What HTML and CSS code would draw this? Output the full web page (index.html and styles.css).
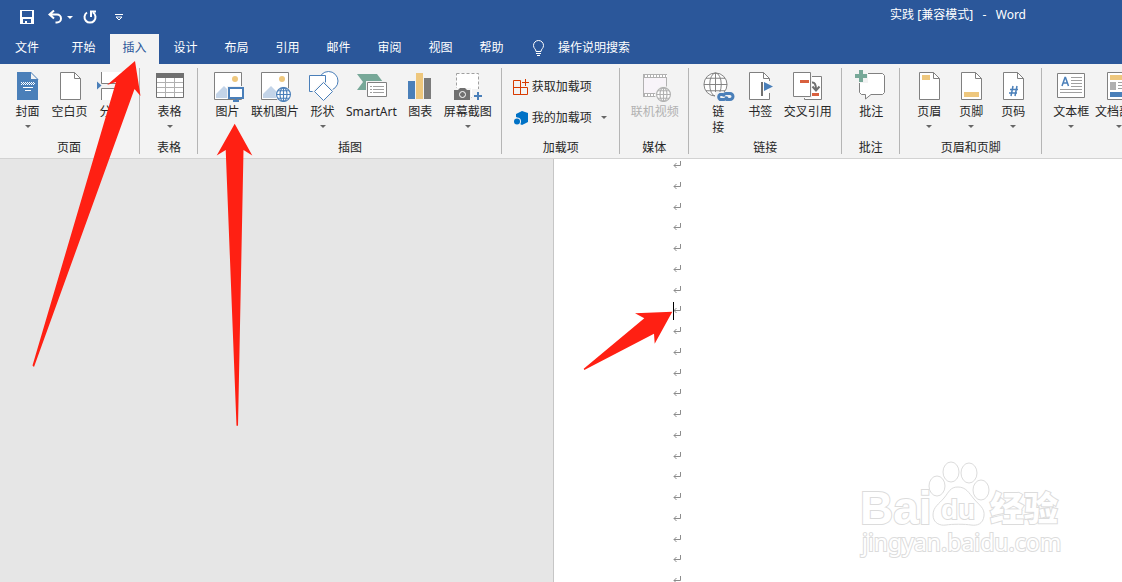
FILE: index.html
```
<!DOCTYPE html>
<html lang="zh-CN">

<head>
  <meta charset="UTF-8">
  <meta name="viewport" content="width=device-width, initial-scale=1.0">
  <title>实践 [兼容模式] - Word</title>
  <link rel="stylesheet" href="styles.css">
</head>

<body>
  <svg class="sprite" aria-hidden="true">
    <symbol id="page" viewBox="0 0 32 32">
      <path d="M6.5 2.5h14l6 6v21h-20z" fill="#fff" stroke="#808080"/>
      <path d="M20.500 2.500v6h6" fill="none" stroke="#808080"/>
    </symbol>
    <symbol id="picture" viewBox="0 0 32 32">
      <path d="M2.500 2.500h27v27h-27z" fill="#fff" stroke="#808080"/>
      <circle cx="23" cy="9" r="3" fill="#eec77d"/>
      <path d="M4 28v-4l8-8 8 8v4z" fill="#c3d4e8"/>
    </symbol>
    <symbol id="globe" viewBox="0 0 26 26">
      <circle cx="13" cy="13" r="12" fill="#fff"/>
      <path d="M13 1v24M1 13h24M3 6.500h20M3 19.500h20"/>
      <ellipse cx="13" cy="13" rx="6" ry="12"/>
    </symbol>
    <symbol id="enter" viewBox="0 0 9 8">
      <path d="M7.500 0v4.500H1M3.500 2L1 4.500 3.500 7" fill="none" stroke="#8c8c8c"/>
    </symbol>
  </svg>

  <header class="titlebar">
    <div class="quick">
      <button class="quick-btn save" aria-label="保存">
        <svg width="14" height="14" viewBox="0 0 14 14"><path d="M0 0h14v14H0zM2 1v6h10V1zM3 9v4h8V9z" fill="#fff" fill-rule="evenodd"/><path d="M5 11h2v3H5z" fill="#fff"/></svg>
      </button>
      <button class="quick-btn undo" aria-label="撤消">
        <svg width="15" height="14" viewBox="0 0 15 14"><path d="M1.500 4.500H9a4 4 0 0 1 0 8H7.500M6 .5l-4.500 4L6 8.500" fill="none" stroke="#fff" stroke-width="2"/></svg>
        <i class="caret"></i>
      </button>
      <button class="quick-btn redo" aria-label="重复">
        <svg width="14" height="14" viewBox="0 0 14 14"><path d="M4 2.500a5.500 5.500 0 1 0 6 0M8 7V1.500h5" fill="none" stroke="#fff" stroke-width="2"/></svg>
      </button>
      <button class="quick-btn more" aria-label="自定义快速访问工具栏">
        <svg width="8" height="7" viewBox="0 0 8 7"><path d="M0 .5h8M1 3l3 3 3-3z" fill="none" stroke="#fff"/></svg>
      </button>
    </div>
    <div class="title">实践 [兼容模式]&nbsp;&nbsp; -&nbsp;&nbsp; Word</div>
  </header>

  <nav class="tabs">
    <button class="tab file">文件</button>
    <button class="tab">开始</button>
    <button class="tab active">插入</button>
    <button class="tab">设计</button>
    <button class="tab">布局</button>
    <button class="tab">引用</button>
    <button class="tab">邮件</button>
    <button class="tab">审阅</button>
    <button class="tab">视图</button>
    <button class="tab">帮助</button>
    <label class="tell" for="tell">
      <svg width="13" height="17" viewBox="0 0 13 17"><path d="M4 11.500C4 9 1.500 8.500 1.500 5.500a5 5 0 0 1 10 0C11.500 8.500 9 9 9 11.500zM4 13.500h5M5 15.500h3" fill="none" stroke="#fff"/></svg>
    </label>
    <input id="tell" type="text" placeholder="操作说明搜索" aria-label="操作说明搜索">
  </nav>

  <div class="ribbon">
    <section class="group">
      <div class="tools">
        <button class="tool">
          <svg class="icon" viewBox="0 0 32 32"><path d="M5 2h13l8 8v20H5z" fill="#4a7fb9"/><path d="M18.500 2l7.500 7.500h-7.500z" fill="#f3f3f3" stroke="#4a7fb9"/><path d="M9 12.500h13M10 13.500h13M9 14.500h13" stroke="#fff" stroke-dasharray="1 1"/><path d="M11 17.500h10M13 20.500h6" stroke="#fff"/></svg>
          <span>封面</span><i class="caret"></i>
        </button>
        <button class="tool">
          <svg class="icon"><use href="#page"/></svg>
          <span>空白页</span>
        </button>
        <button class="tool">
          <svg class="icon" viewBox="0 0 32 32"><path d="M6 2h21v11H6zM6 18h21v12H6z" fill="#fff"/><path d="M5.500 2v11.500h21V2M5.500 30V18.500h21V30" fill="none" stroke="#808080"/><path d="M1 11.500v8l4.500-4z" fill="#4a7fb9"/></svg>
          <span>分页</span>
        </button>
      </div>
      <h2>页面</h2>
    </section>

    <section class="group">
      <div class="tools">
        <button class="tool">
          <svg class="icon" viewBox="0 0 32 32"><path d="M2.500 3.500h27v24h-27z" fill="#fff"/><path d="M3 12.500h26M3 17.500h26M3 22.500h26M11.500 8v19M20.500 8v19" stroke="#b0b0b0"/><path d="M2.500 3.500h27v24h-27z" fill="none" stroke="#707070"/><path d="M2 3h28v5H2z" fill="#707070"/></svg>
          <span>表格</span><i class="caret"></i>
        </button>
      </div>
      <h2>表格</h2>
    </section>

    <section class="group">
      <div class="tools">
        <button class="tool">
          <svg class="icon" viewBox="0 0 32 32"><use href="#picture"/><path d="M15 16h17v13H15z" fill="#f3f3f3"/><path d="M17 18h14v10H17z" fill="#fff" stroke="#4a7fb9" stroke-width="2"/><path d="M23 29h2v2h-2zM21 30h6v2h-6z" fill="#4a7fb9"/></svg>
          <span>图片</span>
        </button>
        <button class="tool">
          <svg class="icon" viewBox="0 0 32 32"><use href="#picture"/><circle cx="24.500" cy="24.500" r="8" fill="#f3f3f3"/><use href="#globe" x="17" y="17" width="15" height="15" fill="none" stroke="#4a7fb9" stroke-width="2"/></svg>
          <span>联机图片</span>
        </button>
        <button class="tool">
          <svg class="icon" viewBox="0 0 32 32"><g fill="#fff" stroke="#4a7fb9"><circle cx="21.500" cy="11" r="9.500"/><path d="M2.500 5.500h16v16h-16z"/><path d="M16.500 12.500l9 9-9 9-9-9z" stroke="#f3f3f3" stroke-width="3"/><path d="M16.500 12.500l9 9-9 9-9-9z"/></g></svg>
          <span>形状</span><i class="caret"></i>
        </button>
        <button class="tool">
          <svg class="icon" viewBox="0 0 32 32"><path d="M2 4h20l6 8v8H2l6-8z" fill="#77a898"/><path d="M11 11h21v17H11z" fill="#f3f3f3"/><path d="M12.500 12.500h19v14h-19z" fill="#fff" stroke="#808080"/><path d="M15 16.500h2M15 19.500h2M15 22.500h2M18 16.500h11M18 19.500h11M18 22.500h11" stroke="#a0a0a0"/></svg>
          <span>SmartArt</span>
        </button>
        <button class="tool">
          <svg class="icon" viewBox="0 0 32 32"><path d="M4 11h7v18H4z" fill="#4a7fb9"/><path d="M12 3h7v26h-7z" fill="#eec77d"/><path d="M20 8h7v21h-7z" fill="#7b7b7b"/></svg>
          <span>图表</span>
        </button>
        <button class="tool">
          <svg class="icon" viewBox="0 0 32 32"><path d="M4.500 3.500h22v24h-22z" fill="#fff" stroke="#a0a0a0" stroke-dasharray="3 2"/><path d="M1 18h18v13H1z" fill="#f3f3f3"/><path d="M2 20h4l2-2h5l2 2h3v10H2z" fill="#707070"/><circle cx="10.500" cy="24.500" r="3" fill="#707070" stroke="#fff"/><path d="M20 19h12v12H20z" fill="#f3f3f3"/><path d="M22 26h8M26 22v8" stroke="#4a7fb9" stroke-width="2"/></svg>
          <span>屏幕截图</span><i class="caret"></i>
        </button>
      </div>
      <h2>插图</h2>
    </section>

    <section class="group">
      <div class="rows">
        <button class="row">
          <svg width="16" height="16" viewBox="0 0 16 16"><path d="M.5 1.500h7v14h-7zM.5 8.500h14v7h-14M12.500 0v7M9 3.500h7" fill="none" stroke="#d83b01"/></svg>
          <span>获取加载项</span>
        </button>
        <button class="row">
          <svg width="16" height="16" viewBox="0 0 16 16"><path d="M9 1l6 2v9l-6 3-3-1.500V9L3 7V4z" fill="#0072c6"/><circle cx="4" cy="11.500" r="4" fill="#f3f3f3"/><circle cx="4" cy="11.500" r="3" fill="#0072c6"/></svg>
          <span>我的加载项</span><i class="caret"></i>
        </button>
      </div>
      <h2>加载项</h2>
    </section>

    <section class="group">
      <div class="tools">
        <button class="tool" disabled>
          <svg class="icon" viewBox="0 0 32 32"><path d="M4 4h24v23H4z" fill="#b1b1b1"/><path d="M5 8h22v15H5z" fill="#f8f4f9"/><path d="M6 6h22M6 25h22" stroke="#fff" stroke-width="2" stroke-dasharray="2 1"/><circle cx="24.500" cy="24.500" r="8.500" fill="#f3f3f3"/><use href="#globe" x="17" y="17" width="15" height="15" fill="none" stroke="#b1b1b1" stroke-width="2"/></svg>
          <span>联机视频</span>
        </button>
      </div>
      <h2>媒体</h2>
    </section>

    <section class="group">
      <div class="tools">
        <button class="tool">
          <svg class="icon" viewBox="0 0 32 32"><use href="#globe" x="1" y="2" width="25" height="25" fill="none" stroke="#808080"/><path d="M13 22h18v10H13z" fill="#f3f3f3"/><g fill="none" stroke="#4a7fb9" stroke-width="3"><path d="M21 24.500h-3a3 3 0 0 0 0 5h4q2 0 3-3"/><path d="M24 29.500h4a3 3 0 0 0 0-6h-4q-2 0-3 3"/></g></svg>
          <span>链<br>接</span>
        </button>
        <button class="tool">
          <svg class="icon" viewBox="0 0 32 32"><use href="#page" x="-1"/><path d="M17 11h11v12H17z" fill="#f3f3f3"/><path d="M17 11h8v12h-8z" fill="#fff"/><path d="M18 12v14" stroke="#707070" stroke-width="2"/><path d="M20 12l9 4.500-9 4.500z" fill="#4a7fb9"/></svg>
          <span>书签</span>
        </button>
        <button class="tool">
          <svg class="icon" viewBox="0 0 32 32"><path d="M12.500 6.500h17v23h-17z" fill="#fff" stroke="#808080"/><path d="M0 1h20v27H0z" fill="#f3f3f3"/><path d="M1.500 2.500h17v24h-17z" fill="#fff" stroke="#808080"/><path d="M8 10h9v3H8zM20 23h7v3h-7z" fill="#d8603e"/><path d="M20 12.500q4-.5 4 7M20.500 16.500l3.500 4 3.500-4" fill="none" stroke="#707070" stroke-width="2"/></svg>
          <span>交叉引用</span>
        </button>
      </div>
      <h2>链接</h2>
    </section>

    <section class="group">
      <div class="tools">
        <button class="tool">
          <svg class="icon" viewBox="0 0 32 32"><path d="M4.500 3.500h23l2 2v17l-2 2H16L10.500 29v-4.500h-4l-2-2z" fill="#fff" stroke="#808080"/><path d="M0 0h13v13H0z" fill="#f3f3f3"/><path d="M6 0v12M0 6h12" stroke="#77a898" stroke-width="4"/></svg>
          <span>批注</span>
        </button>
      </div>
      <h2>批注</h2>
    </section>

    <section class="group">
      <div class="tools">
        <button class="tool">
          <svg class="icon" viewBox="0 0 32 32"><use href="#page"/><path d="M9 5h8v5H9z" fill="#eec77d"/></svg>
          <span>页眉</span><i class="caret"></i>
        </button>
        <button class="tool">
          <svg class="icon" viewBox="0 0 32 32"><use href="#page"/><path d="M9 22h15v5H9z" fill="#eec77d"/></svg>
          <span>页脚</span><i class="caret"></i>
        </button>
        <button class="tool">
          <svg class="icon" viewBox="0 0 32 32"><use href="#page"/><path d="M16 16l-2 10M20 16l-2 10M13 19.500h8M12 23h8" fill="none" stroke="#4a7fb9" stroke-width="1.500"/></svg>
          <span>页码</span><i class="caret"></i>
        </button>
      </div>
      <h2>页眉和页脚</h2>
    </section>

    <section class="group">
      <div class="tools">
        <button class="tool">
          <svg class="icon" viewBox="0 0 32 32"><path d="M2.500 3.500h27v24h-27z" fill="#fff" stroke="#808080"/><path d="M16 7.500h11M16 10.500h11M16 13.500h11M16 16.500h11M5 19.500h22M5 22.500h22" stroke="#a0a0a0"/><path d="M7 16l3-8.500h.5l3 8.500M8 13h5" fill="none" stroke="#4a7fb9" stroke-width="1.500"/></svg>
          <span>文本框</span><i class="caret"></i>
        </button>
        <button class="tool">
          <svg class="icon" viewBox="0 0 32 32"><path d="M4.500 2.500h24v27h-24z" fill="#fff" stroke="#808080"/><path d="M7 5h19v5H7z" fill="#eec77d"/><path d="M7 12h6v8H7z" fill="#b0b0b0"/><path d="M15 12.500h11M15 15.500h11M15 18.500h11" stroke="#a0a0a0"/><path d="M7 22h19v5H7z" fill="#4a7fb9"/></svg>
          <span>文档部件</span><i class="caret"></i>
        </button>
      </div>
    </section>
  </div>

  <main class="workspace">
    <div class="paper">
      <div class="lines"></div>
    </div>
    <svg class="watermark" width="220" height="110" viewBox="850 455 220 110">
      <text class="brand" x="860" y="524">Bai</text>
      <g class="paw">
        <ellipse cx="937" cy="486" rx="8" ry="10"/>
        <ellipse cx="951" cy="472" rx="8" ry="10"/>
        <ellipse cx="969" cy="473" rx="8" ry="10"/>
        <ellipse cx="981" cy="490" rx="8" ry="10"/>
        <path d="M958 487c8 0 11 6 16 12s11 9 10 17-7 10-13 9-19-1-25 0-13-2-13-10 6-11 11-17 6-11 14-11z"/>
      </g>
      <text class="du" x="941" y="519">du</text>
      <text class="cn" x="990" y="521">经验</text>
      <text class="site" x="862" y="551">jingyan.baidu.com</text>
    </svg>
  </main>

  <svg class="arrows" width="700" height="440" viewBox="0 0 700 440" aria-hidden="true">
    <path d="M135 61l5.500 35-6-7L34 367l-1.500-1.500L116 82l-9 3z"/>
    <path d="M234.700 123.700l17.600 31.800-8.800-5.500L238 425.700h-1.500L225.700 150l-9 5.500z"/>
    <path d="M672.300 311.700l-17.600 32-.7-10L584.300 370l-.6-1.300 60.600-50.400-9.300-5z"/>
  </svg>

<script>
  const lines = document.querySelector('.lines')
  const cursorLine = 7
  for (let i = 0; i < 21; i++) {
    const p = document.createElement('p')
    p.innerHTML = '<svg width="9" height="8"><use href="#enter"/></svg>'
    if (i === cursorLine) {
      p.className = 'current'
    }
    lines.appendChild(p)
  }
</script>
</body>

</html>
```

FILE: styles.css
```
* {
  box-sizing: border-box;
}

body {
  margin: 0;
  height: 100vh;
  display: flex;
  flex-direction: column;
  position: relative;
  overflow: hidden;
  font: 12px/16px "Noto Sans", "Noto Sans CJK SC", sans-serif;
  color: #262626;
}

button,
input {
  font: inherit;
  color: inherit;
  background: none;
  border: none;
  padding: 0;
  margin: 0;
}

svg {
  display: block;
  flex: none;
}

.sprite {
  position: absolute;
  width: 0;
  height: 0;
}

.caret {
  border: 3px solid transparent;
  border-top-color: #666;
  border-bottom: none;
}

/* 标题栏 */
.titlebar {
  height: 34px;
  display: flex;
  justify-content: space-between;
  padding: 0 96px 0 20px;
  background: #2b579a;
  color: #fff;
}

.quick {
  display: flex;
  align-items: center;
}

.quick-btn {
  display: flex;
  align-items: center;
  gap: 4px;
}

.quick-btn .caret {
  border-top-color: #fff;
}

.undo {
  margin-left: 14px;
}

.redo {
  margin-left: 10px;
}

.more {
  margin-left: 18px;
}

.title {
  line-height: 30px;
}

/* 选项卡 */
.tabs {
  height: 30px;
  display: flex;
  align-items: stretch;
  gap: 2px;
  background: #2b579a;
  color: #fff;
}

.tab {
  min-width: 49px;
  padding-bottom: 2px;
}

.tab.file {
  padding: 0 18px 2px 15px;
}

.tab.active {
  background: #f3f3f3;
  color: #2b579a;
}

.tell {
  display: flex;
  align-items: center;
  margin: 0 11px 0 14px;
  padding-bottom: 2px;
}

.tabs input {
  flex: 1;
  padding-bottom: 2px;
  outline: none;
}

.tabs input::placeholder {
  color: #fff;
  opacity: 1;
}

/* 功能区 */
.ribbon {
  height: 95px;
  display: flex;
  padding: 4px 0;
  background: #f3f3f3;
  border-bottom: 1px solid #d2d2d2;
  overflow: hidden;
}

.group {
  flex: none;
  display: flex;
  flex-direction: column;
  justify-content: space-between;
  padding: 0 7px 0 8px;
  border-right: 1px solid #b5b5b5;
}

.group:first-child {
  padding-left: 6px;
}

.group:last-child {
  border-right: none;
}

.group h2 {
  margin: 0;
  font-size: 12px;
  line-height: 12px;
  font-weight: normal;
  text-align: center;
}

.tools {
  display: flex;
  align-items: flex-start;
}

.tool {
  min-width: 42px;
  padding: 2px 2px 0 3px;
  display: flex;
  flex-direction: column;
  align-items: center;
  white-space: nowrap;
}

.tool span {
  margin-top: 2px;
}

.tool .caret {
  margin-top: 5px;
}

.tool:disabled {
  color: #b1b1b1;
}

.icon {
  width: 32px;
  height: 32px;
  overflow: visible;
}

.rows {
  padding-top: 3px;
}

.row {
  width: 100%;
  height: 31px;
  padding: 0 5px 0 3px;
  display: flex;
  align-items: center;
  gap: 3px;
}

.row .caret {
  margin-left: 6px;
}

/* 文档区 */
.workspace {
  flex: 1;
  min-height: 0;
  position: relative;
  display: flex;
  padding-left: 553px;
  background: #e6e6e6;
  overflow: hidden;
}

.paper {
  flex: 1;
  padding: 2px 0 0 119px;
  background: #fff;
  border-left: 1px solid #c6c6c6;
}

.lines {
  height: 100%;
  min-height: 423px;
  display: flex;
  flex-direction: column;
  justify-content: space-between;
}

.lines p {
  margin: 0;
  position: relative;
}

.lines .current::before {
  content: "";
  position: absolute;
  left: 0;
  top: -4px;
  width: 1px;
  height: 18px;
  background: #000;
}

.watermark {
  position: absolute;
  right: 52px;
  bottom: 17px;
  fill: #fff;
  stroke: #dcdcdc;
}

.watermark text {
  paint-order: stroke;
  stroke-width: 2px;
}

.watermark .brand {
  font: bold 46px "Liberation Sans", sans-serif;
}

.watermark .du {
  font: bold 28px "Liberation Sans", sans-serif;
}

.watermark .cn {
  font: 900 34px "Noto Sans CJK SC", sans-serif;
}

.watermark .site {
  font: 23px "Noto Sans", sans-serif;
}

.arrows {
  position: absolute;
  left: 0;
  top: 0;
  fill: #ff2013;
  pointer-events: none;
}
```
